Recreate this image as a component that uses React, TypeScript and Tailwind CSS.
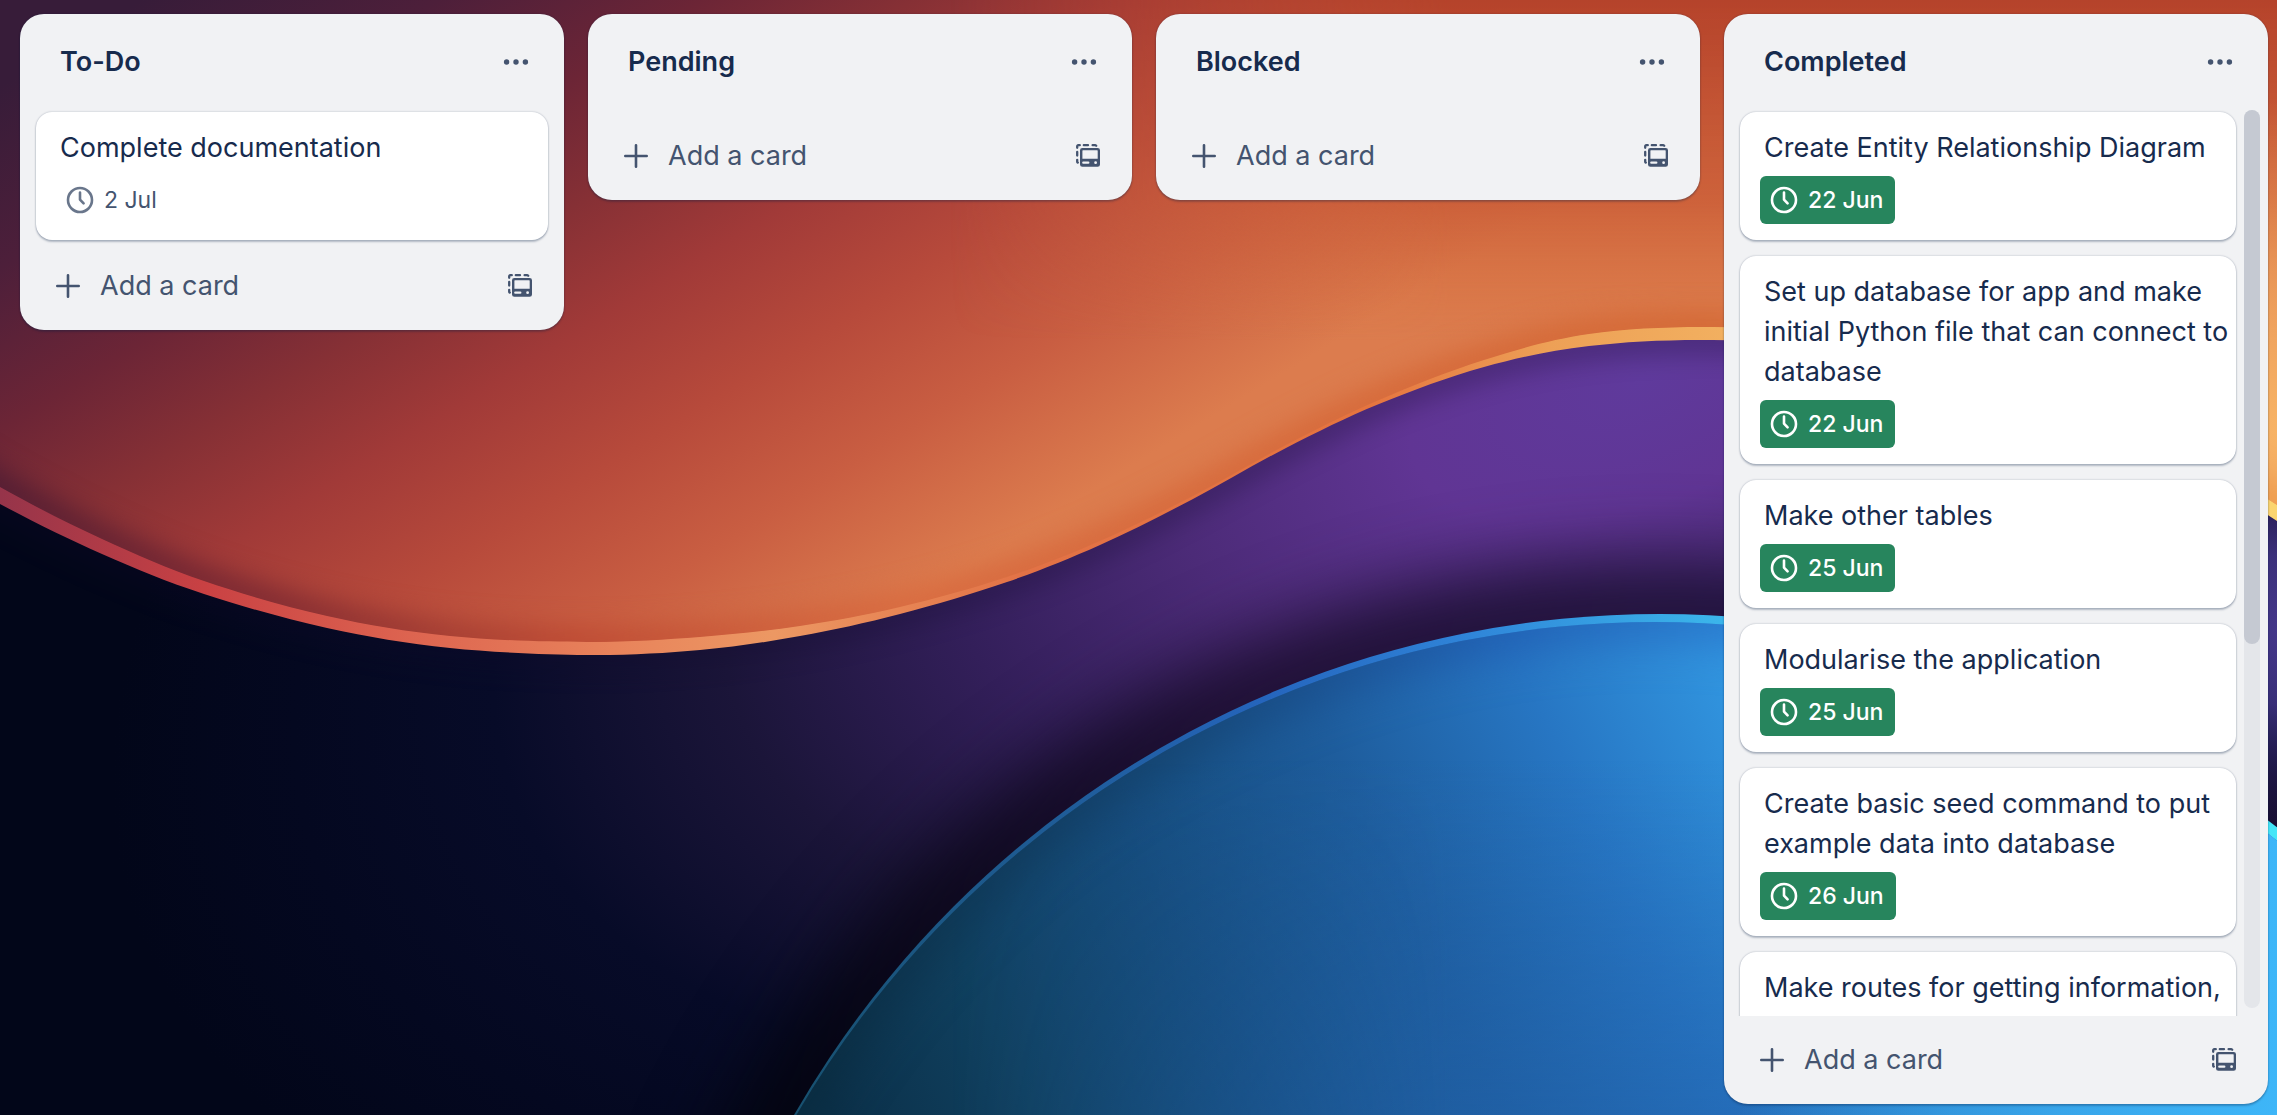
type Card = { title: string; due?: string; done?: boolean };
type List = { title: string; cards: Card[]; scroll?: boolean };

const lists: List[] = [
  { title: 'To-Do', cards: [{ title: 'Complete documentation', due: '2 Jul' }] },
  { title: 'Pending', cards: [] },
  { title: 'Blocked', cards: [] },
  {
    title: 'Completed',
    scroll: true,
    cards: [
      { title: 'Create Entity Relationship Diagram', due: '22 Jun', done: true },
      { title: 'Set up database for app and make initial Python file that can connect to database', due: '22 Jun', done: true },
      { title: 'Make other tables', due: '25 Jun', done: true },
      { title: 'Modularise the application', due: '25 Jun', done: true },
      { title: 'Create basic seed command to put example data into database', due: '26 Jun', done: true },
      { title: 'Make routes for getting information,' },
    ],
  },
];

function ClockIcon() {
  return (
    <svg viewBox="0 0 32 32" className="size-8 shrink-0" fill="none" stroke="currentColor" strokeWidth="2.6" aria-hidden="true">
      <circle cx="16" cy="16" r="12" />
      <path d="M16 8.5V15.6L19.6 19.4" strokeLinecap="round" strokeLinejoin="round" />
    </svg>
  );
}

function PlusIcon() {
  return (
    <svg viewBox="0 0 32 32" className="size-8 shrink-0" fill="none" stroke="currentColor" strokeWidth="2.6" strokeLinecap="round" aria-hidden="true">
      <path d="M16 5.3V26.7M5.3 16H26.7" />
    </svg>
  );
}

function MoreIcon() {
  return (
    <svg viewBox="0 0 32 32" className="size-8" fill="currentColor" aria-hidden="true">
      <circle cx="6.6" cy="16" r="2.7" />
      <circle cx="16" cy="16" r="2.7" />
      <circle cx="25.4" cy="16" r="2.7" />
    </svg>
  );
}

function TemplateIcon() {
  return (
    <svg viewBox="0 0 24 24" className="size-6" aria-hidden="true">
      <g fill="none" stroke="currentColor" strokeWidth="2.3" strokeLinecap="round">
        <path d="M1.2 3.8V2.2a1 1 0 0 1 1-1H3.8M7.8 1.2H12M16.6 1.2H19a1.6 1.6 0 0 1 1.2.5M1.2 8V11.6M1.2 15.8V17.6a1 1 0 0 0 .6 1" />
      </g>
      <path
        fill="currentColor"
        fillRule="evenodd"
        d="M6.4 3.9H21.6A2.4 2.4 0 0 1 24 6.3V20.4A2.4 2.4 0 0 1 21.6 22.8H6.4A2.4 2.4 0 0 1 4 20.4V6.3A2.4 2.4 0 0 1 6.4 3.9ZM7 6.2a.6.6 0 0 0-.6.6V14.7H21.7V6.8a.6.6 0 0 0-.6-.6ZM7.3 17.5a1.15 1.15 0 0 0 0 2.3H12.3a1.15 1.15 0 0 0 0-2.3ZM19.6 17.3a1.4 1.4 0 1 0 0 2.8a1.4 1.4 0 0 0 0-2.8Z"
      />
    </svg>
  );
}

type Point = [number, number];

/* Catmull-Rom spline through the points, as cubic Bézier segments. */
function spline(points: Point[]) {
  let d = `M${points[0][0]} ${points[0][1]}`;
  for (let i = 0; i < points.length - 1; i++) {
    const a = points[Math.max(i - 1, 0)];
    const b = points[i];
    const c = points[i + 1];
    const e = points[Math.min(i + 2, points.length - 1)];
    d += `C${b[0] + (c[0] - a[0]) / 6} ${b[1] + (c[1] - a[1]) / 6} ${c[0] - (e[0] - b[0]) / 6} ${c[1] - (e[1] - b[1]) / 6} ${c[0]} ${c[1]}`;
  }
  return d;
}

const outerEdge = spline([
  [-110, 440], [0, 504], [102, 554], [204, 594], [327, 628], [450, 648], [587, 655], [700, 650], [800, 636], [900, 614],
  [1007, 582], [1100, 545], [1193, 499], [1286, 448], [1379, 404], [1484, 367], [1589, 346], [1713, 340], [1860, 349],
  [2000, 380], [2140, 440], [2277, 521], [2400, 610],
]);
const innerEdge = spline([
  [-110, 420], [0, 487], [102, 539], [204, 581], [327, 616], [450, 636], [587, 642], [700, 637], [800, 626], [900, 607],
  [1007, 577], [1100, 541], [1193, 496], [1286, 445], [1379, 400], [1484, 360], [1589, 334], [1713, 327], [1860, 336],
  [2000, 366], [2140, 425], [2277, 505], [2400, 594],
]);
const outerWave = `${outerEdge}V-100H-110Z`;
const innerWave = `${innerEdge}V-100H-110Z`;

function Wallpaper() {
  return (
    <svg viewBox="0 0 2277 1115" preserveAspectRatio="xMidYMid slice" className="absolute inset-0 -z-10 size-full" aria-hidden="true">
      <defs>
        <linearGradient id="ember" gradientUnits="userSpaceOnUse" x1="38" y1="63" x2="514" y2="843">
          <stop offset="0" stopColor="#371c39" />
          <stop offset="0.17" stopColor="#4d1f3a" />
          <stop offset="0.32" stopColor="#6c2536" />
          <stop offset="0.44" stopColor="#863035" />
          <stop offset="0.56" stopColor="#a13a38" />
          <stop offset="0.7" stopColor="#b74a3b" />
          <stop offset="0.84" stopColor="#c95e42" />
          <stop offset="1" stopColor="#dc7c4e" />
        </linearGradient>
        <linearGradient id="topShade" gradientUnits="userSpaceOnUse" x1="0" y1="0" x2="0" y2="340">
          <stop offset="0" stopColor="#b5432b" />
          <stop offset="0.6" stopColor="#cb5e38" stopOpacity="0.85" />
          <stop offset="1" stopColor="#d8733f" stopOpacity="0" />
        </linearGradient>
        <linearGradient id="topFade" gradientUnits="userSpaceOnUse" x1="950" y1="0" x2="1450" y2="0">
          <stop offset="0" stopColor="#000" />
          <stop offset="1" stopColor="#fff" />
        </linearGradient>
        <mask id="topMask" maskUnits="userSpaceOnUse" x="0" y="0" width="2277" height="1115">
          <rect width="2277" height="1115" fill="url(#topFade)" />
        </mask>
        <radialGradient id="amber" gradientUnits="userSpaceOnUse" cx="2290" cy="430" r="330">
          <stop offset="0" stopColor="#f8b566" />
          <stop offset="1" stopColor="#f8b566" stopOpacity="0" />
        </radialGradient>
        <linearGradient id="rim" gradientUnits="userSpaceOnUse" x1="0" y1="0" x2="2277" y2="0">
          <stop offset="0" stopColor="#96344a" />
          <stop offset="0.09" stopColor="#c94143" />
          <stop offset="0.18" stopColor="#dd6450" />
          <stop offset="0.27" stopColor="#e8835b" />
          <stop offset="0.34" stopColor="#ec9863" />
          <stop offset="0.45" stopColor="#e27246" />
          <stop offset="0.6" stopColor="#e5743f" />
          <stop offset="0.68" stopColor="#eda056" />
          <stop offset="0.76" stopColor="#f2b060" />
          <stop offset="1" stopColor="#fbd56f" />
        </linearGradient>
        <linearGradient id="innerShade" gradientUnits="userSpaceOnUse" x1="0" y1="0" x2="2277" y2="0">
          <stop offset="0" stopColor="#471a33" />
          <stop offset="0.12" stopColor="#742430" />
          <stop offset="0.25" stopColor="#b9442f" />
          <stop offset="0.4" stopColor="#d8663c" />
          <stop offset="0.75" stopColor="#d2642f" />
          <stop offset="1" stopColor="#ee9b4a" />
        </linearGradient>
        <radialGradient id="navy" gradientUnits="userSpaceOnUse" cx="0" cy="0" r="1" gradientTransform="translate(1640 380) rotate(-20) scale(1600 811)">
          <stop offset="0" stopColor="#5f3a9c" />
          <stop offset="0.15" stopColor="#603594" />
          <stop offset="0.3" stopColor="#4c2b78" />
          <stop offset="0.45" stopColor="#331f5a" />
          <stop offset="0.6" stopColor="#1b1539" />
          <stop offset="0.75" stopColor="#070b28" />
          <stop offset="0.88" stopColor="#040820" />
          <stop offset="1" stopColor="#020619" />
        </radialGradient>
        <radialGradient id="indigo" gradientUnits="userSpaceOnUse" cx="2290" cy="630" r="190">
          <stop offset="0" stopColor="#46388c" />
          <stop offset="0.4" stopColor="#43378a" stopOpacity="0.8" />
          <stop offset="1" stopColor="#2c2060" stopOpacity="0" />
        </radialGradient>
        <linearGradient id="ocean" gradientUnits="userSpaceOnUse" x1="840" y1="1130" x2="1760" y2="700">
          <stop offset="0" stopColor="#0b3049" />
          <stop offset="0.18" stopColor="#10405f" />
          <stop offset="0.38" stopColor="#164c7c" />
          <stop offset="0.6" stopColor="#1e5d9d" />
          <stop offset="0.8" stopColor="#2776c3" />
          <stop offset="1" stopColor="#3298e2" />
        </linearGradient>
        <linearGradient id="oceanRight" gradientUnits="userSpaceOnUse" x1="1740" y1="0" x2="2277" y2="0">
          <stop offset="0" stopColor="#3eb6f8" stopOpacity="0" />
          <stop offset="0.6" stopColor="#3eb6f8" stopOpacity="0.7" />
          <stop offset="1" stopColor="#3eb6f8" />
        </linearGradient>
        <linearGradient id="oceanBottom" gradientUnits="userSpaceOnUse" x1="0" y1="760" x2="0" y2="1115">
          <stop offset="0" stopColor="#2263ae" stopOpacity="0" />
          <stop offset="1" stopColor="#2263ae" stopOpacity="0.5" />
        </linearGradient>
        <linearGradient id="oceanRim" gradientUnits="userSpaceOnUse" x1="790" y1="0" x2="2277" y2="0">
          <stop offset="0" stopColor="#17506e" />
          <stop offset="0.18" stopColor="#1f5c97" />
          <stop offset="0.32" stopColor="#2565bd" />
          <stop offset="0.45" stopColor="#2f83d8" />
          <stop offset="0.62" stopColor="#3bb4ea" />
          <stop offset="1" stopColor="#45e6f8" />
        </linearGradient>
        <linearGradient id="oceanShade" gradientUnits="userSpaceOnUse" x1="790" y1="0" x2="1800" y2="0">
          <stop offset="0" stopColor="#092a3c" />
          <stop offset="0.4" stopColor="#154370" />
          <stop offset="0.7" stopColor="#1f58ae" />
          <stop offset="1" stopColor="#2a77cf" />
        </linearGradient>
        <linearGradient id="under" gradientUnits="userSpaceOnUse" x1="790" y1="0" x2="1800" y2="0">
          <stop offset="0" stopColor="#03040f" />
          <stop offset="0.45" stopColor="#1c0e30" />
          <stop offset="1" stopColor="#1d1238" />
        </linearGradient>
        <filter id="softer" colorInterpolationFilters="sRGB" filterUnits="userSpaceOnUse" x="-300" y="-300" width="2900" height="1800">
          <feGaussianBlur stdDeviation="38" />
        </filter>
        <filter id="soft" colorInterpolationFilters="sRGB" filterUnits="userSpaceOnUse" x="-300" y="-300" width="2900" height="1800">
          <feGaussianBlur stdDeviation="24" />
        </filter>
        <filter id="fine" colorInterpolationFilters="sRGB" filterUnits="userSpaceOnUse" x="-300" y="-300" width="2900" height="1800">
          <feGaussianBlur stdDeviation="14" />
        </filter>
        <clipPath id="waveClip">
          <path d={innerWave} />
        </clipPath>
        <clipPath id="oceanClip">
          <circle cx="1655" cy="1616" r="994" />
        </clipPath>
      </defs>
      <rect width="2277" height="1115" fill="url(#navy)" />
      <path d={outerEdge} fill="none" stroke="#120a2c" strokeWidth="20" opacity="0.4" filter="url(#fine)" />
      <circle cx="1660" cy="1613" r="1000" fill="none" stroke="url(#under)" strokeWidth="100" filter="url(#softer)" />
      <rect width="2277" height="1115" fill="url(#indigo)" />
      <circle cx="1660" cy="1613" r="999" fill="url(#oceanRim)" />
      <g clipPath="url(#oceanClip)">
        <rect width="2277" height="1115" fill="url(#ocean)" />
        <rect width="2277" height="1115" fill="url(#oceanBottom)" mask="url(#topMask)" />
        <circle cx="1655" cy="1616" r="1000" fill="none" stroke="url(#oceanShade)" strokeWidth="40" filter="url(#soft)" />
        <rect width="2277" height="1115" fill="url(#oceanRight)" />
      </g>
      <path d={outerWave} fill="url(#rim)" />
      <g clipPath="url(#waveClip)">
        <path d={innerWave} fill="url(#ember)" />
        <rect width="2277" height="600" fill="url(#topShade)" mask="url(#topMask)" />
        <rect width="2277" height="700" fill="url(#amber)" />
        <path d={innerEdge} fill="none" stroke="url(#innerShade)" strokeWidth="24" filter="url(#fine)" />
      </g>
    </svg>
  );
}

function DueBadge({ due, done }: { due: string; done?: boolean }) {
  return (
    <div
      className={
        done
          ? 'mt-2 flex h-12 w-fit items-center gap-2 rounded-md bg-[#27855d] pr-3 pl-2 text-[23px] font-medium text-white'
          : 'mt-2 flex h-12 w-fit items-center gap-2 rounded-md pr-3 pl-2 text-[23px] text-[#44546f]'
      }
    >
      <span className={done ? '' : 'opacity-80'}>
        <ClockIcon />
      </span>
      <time>{due}</time>
    </div>
  );
}

function CardItem({ card }: { card: Card }) {
  return (
    <li className="min-h-32 shrink-0 rounded-2xl bg-white py-4 pr-1 pl-5 shadow-[0_2px_2px_#091e4240,0_0_2px_#091e424f]">
      <p className="pl-1">{card.title}</p>
      {card.due && <DueBadge due={card.due} done={card.done} />}
    </li>
  );
}

function ListColumn({ list }: { list: List }) {
  return (
    <section
      aria-label={list.title}
      className="flex max-h-full w-[544px] shrink-0 flex-col rounded-3xl bg-[#f1f2f4] shadow-[0_2px_2px_#091e4240,0_0_2px_#091e424f]"
    >
      <header className="flex h-24 shrink-0 items-center justify-between pr-4 pl-10">
        <h2 className="font-semibold">{list.title}</h2>
        <button type="button" aria-label="List actions" className="flex h-14 w-16 items-center justify-center text-[#44546f]">
          <MoreIcon />
        </button>
      </header>
      <div className="flex min-h-0">
        <ol
          className={
            list.scroll
              ? 'flex flex-1 flex-col gap-4 overflow-y-auto pt-0.5 pr-2 pb-0.5 pl-4 [scrollbar-width:none]'
              : 'flex flex-1 flex-col gap-4 px-4 pt-0.5'
          }
        >
          {list.cards.map((card) => (
            <CardItem key={card.title} card={card} />
          ))}
        </ol>
        {list.scroll && (
          <div className="mr-2 mb-2 w-4 rounded-full bg-[#e4e6ea]">
            <div className="h-[59.5%] rounded-full bg-[#c5c9d2]" />
          </div>
        )}
      </div>
      <footer className={list.cards.length && !list.scroll ? 'mt-0.5 flex shrink-0 p-4' : 'flex shrink-0 p-4'}>
        <button type="button" className="flex h-14 flex-1 items-center gap-4 pl-4 text-[#44546f]">
          <PlusIcon />
          Add a card
        </button>
        <button type="button" aria-label="Create from template" className="flex size-14 items-center justify-center text-[#44546f]">
          <TemplateIcon />
        </button>
      </footer>
    </section>
  );
}

export default function App() {
  return (
    <main className="relative isolate flex h-screen items-start gap-6 overflow-hidden bg-[#020618] px-5 pt-[14px] pb-[11px] font-[Inter,sans-serif] text-[27px] leading-10 text-[#172b4d]">
      <Wallpaper />
      {lists.map((list) => (
        <ListColumn key={list.title} list={list} />
      ))}
    </main>
  );
}
